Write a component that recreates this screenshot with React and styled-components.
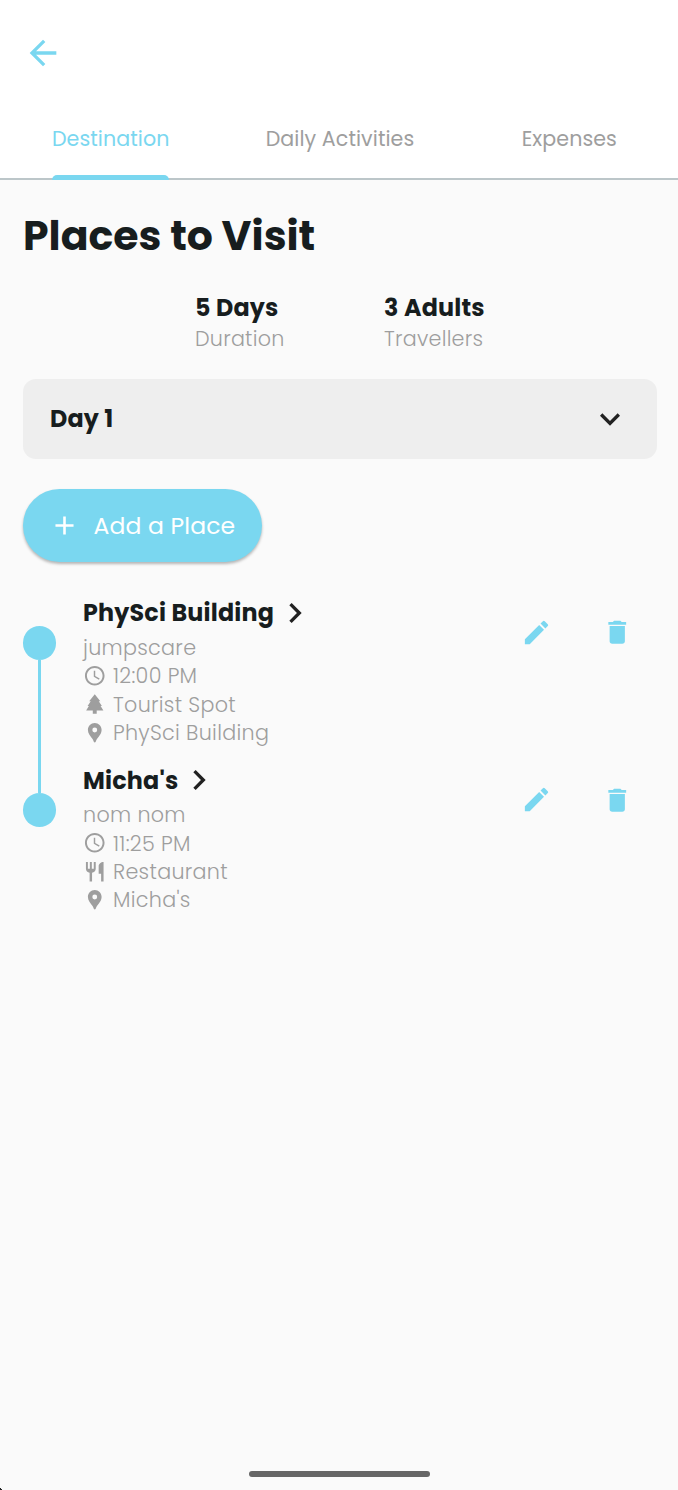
import React from 'react';
import styled, { createGlobalStyle } from 'styled-components';
import {
  MdAccessTime,
  MdAdd,
  MdArrowBack,
  MdChevronRight,
  MdDelete,
  MdEdit,
  MdExpandMore,
  MdLocationPin,
  MdRestaurant,
} from 'react-icons/md';

const sky = '#7ad7f0';
const ink = '#171d1e';
const muted = '#9e9e9e';

const GlobalStyle = createGlobalStyle`
  * { box-sizing: border-box; }
  body {
    margin: 0;
    background: #fafafa;
    color: ${ink};
    font-family: Poppins, Inter, "Open Sans", sans-serif;
    font-feature-settings: "cv11";
  }
  button { font: inherit; font-feature-settings: inherit; border: 0; padding: 0; background: none; color: inherit; }
  svg { display: block; flex: none; }
`;

const Screen = styled.div`
  width: 678px;
  height: 1490px;
  display: flex;
  flex-direction: column;
  overflow: hidden;
  background: linear-gradient(45deg, #222 1.6px, transparent 1.7px);
`;

const Header = styled.header`
  height: 180px;
  flex: none;
  display: flex;
  flex-direction: column;
  background: #fff;
  border-bottom: 2px solid #bcc6c9;
`;

const BackButton = styled.button`
  margin: 33px 0 0 23px;
  width: 40px;
  height: 40px;
  color: ${sky};
`;

const Tabs = styled.nav`
  flex: 1;
  display: grid;
  grid-template-columns: repeat(3, 1fr);
  margin: 24px -6px -2px -4px;
`;

const Tab = styled.button`
  display: flex;
  flex-direction: column;
  align-items: center;
  justify-content: space-between;
  white-space: nowrap;
  color: ${(p) => (p.$active ? sky : muted)};
  font-size: 20.6px;
  line-height: 30px;
  letter-spacing: 0.08px;
  padding-top: 27px;
`;

const Indicator = styled.span`
  width: 117px;
  height: 5px;
  border-radius: 5px 5px 0 0;
  background: ${(p) => (p.$active ? sky : 'transparent')};
`;

const Content = styled.main`
  flex: 1;
  display: flex;
  flex-direction: column;
  padding: 0 21px 0 23px;
`;

const Title = styled.h1`
  margin: 25px 0 0;
  font-size: 41px;
  font-weight: 700;
  line-height: 62px;
`;

const Stats = styled.section`
  display: flex;
  gap: 99.5px;
  margin: 24px 0 0 172px;
`;

const Stat = styled.div`
  white-space: nowrap;
`;

const StatValue = styled.div`
  font-size: 23.8px;
  font-weight: 700;
  line-height: 34px;
  letter-spacing: 0.2px;
`;

const StatLabel = styled.div`
  font-size: 20.7px;
  font-weight: 300;
  line-height: 28px;
  color: ${muted};
  letter-spacing: 0.24px;
`;

const DayPicker = styled.button`
  height: 80.5px;
  margin-top: 25.5px;
  padding: 0 26.6px 0 27px;
  display: flex;
  align-items: center;
  justify-content: space-between;
  border-radius: 13px;
  background: #eee;
  font-size: 23.8px;
  font-weight: 700;
  line-height: 38px;
  letter-spacing: 0.2px;
`;

const AddButton = styled.button`
  width: 239.4px;
  height: 73.4px;
  margin-top: 30px;
  padding: 0 0 0 26px;
  display: flex;
  align-items: center;
  gap: 13.5px;
  flex: none;
  border-radius: 37px;
  background: ${sky};
  color: #fff;
  white-space: nowrap;
  font-size: 23.5px;
  letter-spacing: 0.15px;
  box-shadow: 0 2px 3px rgba(0, 0, 0, 0.28);
`;

const Timeline = styled.ol`
  list-style: none;
  margin: 33.6px 0 0;
  padding: 0;
`;

const Stop = styled.li`
  display: flex;
  height: 167.2px;
`;

const Rail = styled.div`
  width: 33px;
  margin-right: 27px;
  display: flex;
  flex-direction: column;
  align-items: center;
`;

const Segment = styled.span`
  width: 3px;
  height: ${(p) => p.$height};
  flex: ${(p) => (p.$height ? 'none' : '1')};
  background: ${(p) => (p.$visible ? sky : 'transparent')};
`;

const Dot = styled.span`
  width: 33.4px;
  height: 33.4px;
  flex: none;
  border-radius: 50%;
  background: ${sky};
`;

const Details = styled.div`
  flex: 1;
  white-space: nowrap;
`;

const PlaceName = styled.h2`
  margin: 0 0 3.4px;
  height: 34px;
  display: flex;
  align-items: center;
  gap: 0.6px;
  font-size: 23.8px;
  font-weight: 700;
  letter-spacing: 0.2px;
`;

const Line = styled.div`
  height: 28.3px;
  display: flex;
  align-items: center;
  gap: 6.5px;
  color: ${muted};
  font-size: 20.7px;
  font-weight: 300;
  letter-spacing: 0.3px;
`;

const Actions = styled.div`
  display: flex;
  gap: 49.5px;
  padding: 21.2px 24.8px 0 0;
  color: ${sky};
`;

const IconButton = styled.button`
  height: 31px;
`;

const HomeBar = styled.div`
  width: 181px;
  height: 6px;
  margin: 0 0 13px 1px;
  border-radius: 3px;
  background: #666;
  align-self: center;
  flex: none;
`;

function PineTree({ size }) {
  return (
    <svg width={size} height={size} viewBox="0 0 24 24" fill="currentColor">
      <path d="M12 2.2 6.3 9.4H7.9L4.7 14.2H6L3.2 18.9H10V22.2H14V18.9H20.8L18 14.2H19.3L16.1 9.4H17.7Z" />
    </svg>
  );
}

const tabs = [
  { label: 'Destination', active: true },
  { label: 'Daily Activities' },
  { label: 'Expenses' },
];

const stats = [
  { value: '5 Days', label: 'Duration' },
  { value: '3 Adults', label: 'Travellers' },
];

const places = [
  {
    name: 'PhySci Building',
    lines: [
      { text: 'jumpscare' },
      { icon: MdAccessTime, text: '12:00 PM' },
      { icon: PineTree, text: 'Tourist Spot' },
      { icon: MdLocationPin, text: 'PhySci Building' },
    ],
  },
  {
    name: "Micha's",
    lines: [
      { text: 'nom nom' },
      { icon: MdAccessTime, text: '11:25 PM' },
      { icon: MdRestaurant, text: 'Restaurant' },
      { icon: MdLocationPin, text: "Micha's" },
    ],
  },
];

export default function App() {
  return (
    <Screen>
      <GlobalStyle />
      <Header>
        <BackButton aria-label="Back"><MdArrowBack size={40} /></BackButton>
        <Tabs>
          {tabs.map((t) => (
            <Tab key={t.label} $active={t.active}>
              {t.label}
              <Indicator $active={t.active} />
            </Tab>
          ))}
        </Tabs>
      </Header>
      <Content>
        <Title>Places to Visit</Title>
        <Stats>
          {stats.map((s) => (
            <Stat key={s.label}>
              <StatValue>{s.value}</StatValue>
              <StatLabel>{s.label}</StatLabel>
            </Stat>
          ))}
        </Stats>
        <DayPicker>
          Day 1
          <MdExpandMore size={40} color="#212121" />
        </DayPicker>
        <AddButton>
          <MdAdd size={31} />
          Add a Place
        </AddButton>
        <Timeline>
          {places.map((p, i) => (
            <Stop key={p.name}>
              <Rail>
                <Segment $height="30.2px" $visible={i > 0} />
                <Dot />
                <Segment $visible={i < places.length - 1} />
              </Rail>
              <Details>
                <PlaceName>
                  {p.name}
                  <MdChevronRight size={40} color="#212121" />
                </PlaceName>
                {p.lines.map(({ icon: Icon, text }) => (
                  <Line key={text}>
                    {Icon && <Icon size={23.5} />}
                    {text}
                  </Line>
                ))}
              </Details>
              <Actions>
                <IconButton aria-label="Edit"><MdEdit size={31} /></IconButton>
                <IconButton aria-label="Delete"><MdDelete size={30.5} /></IconButton>
              </Actions>
            </Stop>
          ))}
        </Timeline>
      </Content>
      <HomeBar />
    </Screen>
  );
}
